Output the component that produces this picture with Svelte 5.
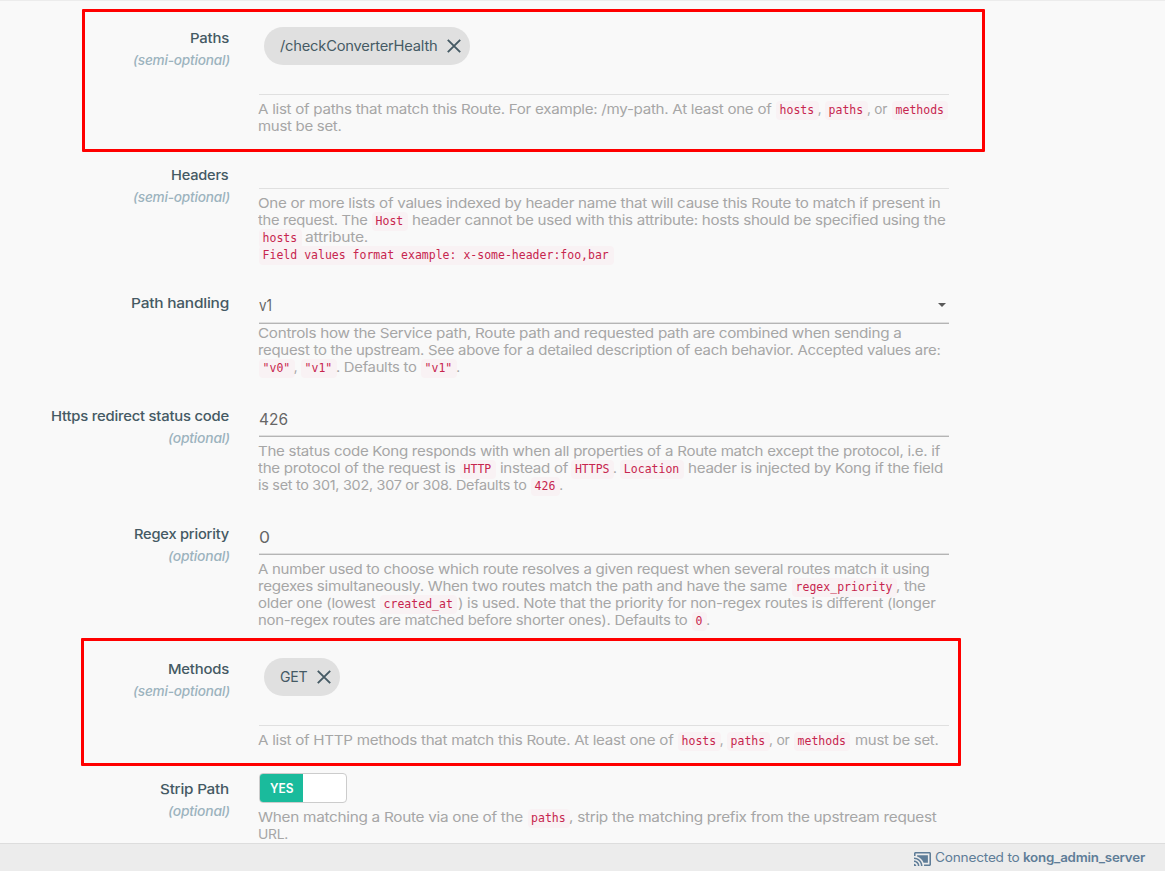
<script>
  // Each help line is a list of runs: [text, left edge, right edge] for prose, [code, left edge] for code.
  const L = 259;
  const CH = 6.93;
  const rows = [
    { label: 'Paths', opt: 'semi-optional', h: 137, kind: 'chip', chip: ['/checkConverterHealth', 157.5], lines: [
      [['A list of paths that match this Route. For example: /my-path. At least one of', L, 772.5], ['hosts', 776], [',', 818.5, 0], ['paths', 825], [', or', 868, 888], ['methods', 892]],
      [['must be set.', L, 342.5]] ] },
    { label: 'Headers', opt: 'semi-optional', h: 128, kind: 'blank', lines: [
      [['One or more lists of values indexed by header name that will cause this Route to match if present in', L, 941.5]],
      [['the request. The', L, 368.5], ['Host', 372], ['header cannot be used with this attribute: hosts should be specified using the', 412.5, 946]],
      [['hosts', L], ['attribute.', 305.5, 368.5]],
      [['Field values format example: x-some-header:foo,bar', L]] ] },
    { label: 'Path handling', opt: '', h: 113, kind: 'select', value: ['v1', 13], lines: [
      [['Controls how the Service path, Route path and requested path are combined when sending a', L, 902.5]],
      [['request to the upstream. See above for a detailed description of each behavior. Accepted values are:', L, 941.5]],
      [['"v0"', L], [',', 294.5, 0], ['"v1"', 301], ['. Defaults to', 337, 417.5], ['"v1"', 421], ['.', 457, 0]] ] },
    { label: 'Https redirect status code', opt: 'optional', h: 118, kind: 'input', value: ['426', 29], lines: [
      [['The status code Kong responds with when all properties of a Route match except the protocol, i.e. if', L, 941]],
      [['the protocol of the request is', L, 456.5], ['HTTP', 460], ['instead of', 500.5, 568.5], ['HTTPS', 571.3], ['.', 613.7, 0], ['Location', 620.3], ['header is injected by Kong if the field', 688.5, 943.5]],
      [['is set to 301, 302, 307 or 308. Defaults to', L, 527.5], ['426', 531], ['.', 560, 0]] ] },
    { label: 'Regex priority', opt: 'optional', h: 135, kind: 'input', value: ['0', 11], lines: [
      [['A number used to choose which route resolves a given request when several routes match it using', L, 930.5]],
      [['regexes simultaneously. When two routes match the path and have the same', L, 788], ['regex_priority', 792], [', the', 897, 926.5]],
      [['older one (lowest', L, 376.5], ['created_at', 380], [') is used. Note that the priority for non-regex routes is different (longer', 458.5, 936]],
      [['non-regex routes are matched before shorter ones). Defaults to', L, 688.5], ['0', 692], ['.', 707, 0]] ] },
    { label: 'Methods', opt: 'semi-optional', h: 120, kind: 'chip', chip: ['GET', 27.5], lines: [
      [['A list of HTTP methods that match this Route. At least one of', L, 674.5], ['hosts', 678], [',', 720.5, 0], ['paths', 727], [', or', 770, 790.5], ['methods', 794], ['must be set.', 855.5, 939]] ] },
    { label: 'Strip Path', opt: 'optional', h: 65, kind: 'toggle', lines: [
      [['When matching a Route via one of the', L, 524], ['paths', 527.5], [', strip the matching prefix from the upstream request', 570, 937.5]],
      [['URL.', L, 289]] ] }
  ];
  const labelW = { 'Paths': 39, 'Headers': 57.5, 'Path handling': 98, 'Https redirect status code': 178, 'Regex priority': 95, 'Methods': 61, 'Strip Path': 69 };
  const optW = { 'semi-optional': 97, 'optional': 62 };

  // Converts absolute run edges to gaps between neighbouring inline boxes.
  function runs(line) {
    let end = L;
    return line.map(([text, x, right]) => {
      const code = right === undefined;
      const w = code ? text.length * CH + 8 : right ? right - x : 4;
      const r = { text, code, gap: x - end, w, fit: right || 0 };
      end = x + w;
      return r;
    });
  }

  // Widens the letterforms so that the text fills the given width.
  function fit(node, width) {
    if (!width) return;
    node.style.display = 'inline-block';
    const natural = node.getBoundingClientRect().width;
    node.style.width = width + 'px';
    node.style.textAlign = 'left';
    node.style.transformOrigin = '0 50%';
    node.style.transform = `scaleX(${width / natural})`;
  }
</script>

<div class="page">
  <main>
    {#each rows as r}
      <div class="row" style="height:{r.h}px">
        <div class="side">
          <div class="label"><span use:fit={labelW[r.label]}>{r.label}</span></div>
          {#if r.opt}<div class="opt"><span use:fit={optW[r.opt]}>({r.opt})</span></div>{/if}
        </div>
        <div class="content">
          {#if r.kind === 'chip'}
            <div class="chips">
              <div class="chip">
                <span class="chiptext" style="width:{r.chip[1]}px"><span use:fit={r.chip[1]}>{r.chip[0]}</span></span>
                <svg width="14" height="14" viewBox="0 0 14 14"><path d="M.8.8l12.4 12.4M13.2.8L.8 13.2" fill="none" stroke="#455a64" stroke-width="1.9" /></svg>
              </div>
            </div>
          {:else if r.kind === 'blank'}
            <div class="blank"></div>
          {:else if r.kind === 'toggle'}
            <div class="toggle"><div class="yes"><span use:fit={23.5}>YES</span></div></div>
          {:else}
            <div class="field" class:select={r.kind === 'select'}>
              <span use:fit={r.value[1]}>{r.value[0]}</span>
              {#if r.kind === 'select'}<i class="caret"></i>{/if}
            </div>
          {/if}
          <div class="help">
            {#each r.lines as line}
              <div class="line">
                {#each runs(line) as s}
                  {#if s.code}<code style="margin-left:{s.gap}px;width:{s.w}px">{s.text}</code>
                  {:else}<span class="run" style="margin-left:{s.gap}px;width:{s.w}px"><span use:fit={s.fit ? s.w : 0}>{s.text}</span></span>{/if}
                {/each}
              </div>
            {/each}
          </div>
        </div>
      </div>
    {/each}
  </main>
  <footer>
    <svg width="17" height="14" viewBox="1 3 22 18" fill="#5f7d98"><path d="M1 18v3h3c0-1.66-1.34-3-3-3zm0-4v2c2.76 0 5 2.24 5 5h2c0-3.87-3.13-7-7-7zm18-7H5v1.63c3.96 1.28 7.09 4.41 8.37 8.37H19V7zM1 10v2c4.97 0 9 4.03 9 9h2c0-6.08-4.93-11-11-11zm20-7H3c-1.1 0-2 .9-2 2v3h2V5h18v14h-7v2h7c1.1 0 2-.9 2-2V5c0-1.1-.9-2-2-2z" /></svg>
    <span class="conn"><span use:fit={84.5}>Connected to</span></span>
    <span class="server"><span use:fit={122}>kong_admin_server</span></span>
  </footer>
  <div class="mark first"></div>
  <div class="mark second"></div>
</div>

<style>
  :global(body) { margin: 0; background: #f9f9f9; overflow: hidden; }
  .page { position: relative; box-sizing: border-box; width: 1165px; height: 871px; display: flex; flex-direction: column; border-top: 1px solid #ececec; background: #f9f9f9; font-family: Inter, 'Open Sans', sans-serif; white-space: nowrap; overflow: hidden; }
  main { box-sizing: border-box; flex: none; height: 842px; padding-top: 26px; overflow: hidden; }
  .row { display: grid; grid-template-columns: 229px 690px; column-gap: 30px; }
  .side { padding-top: 1px; text-align: right; font-size: 13.6px; line-height: 20px; letter-spacing: -0.2px; }
  .label { height: 20px; margin-right: 0.5px; color: #455a64; font-weight: 500; }
  .opt { height: 20px; margin: 1.5px -1px 0 0; color: #9cb3be; font-style: italic; font-weight: 500; font-size: 13px; }
  .chips { height: 67px; padding-left: 5px; border-bottom: 1px solid #e0e0e0; }
  .chip { display: inline-flex; align-items: center; gap: 9.5px; box-sizing: border-box; height: 38px; padding: 0 9px 0 16px; border-radius: 19px; background: #e0e0e0; color: #455a64; font-size: 14px; line-height: 38px; letter-spacing: -0.2px; }
  .chiptext { display: block; height: 38px; }
  .blank { height: 24px; border-bottom: 1px solid #e0e0e0; }
  .field { display: flex; align-items: center; justify-content: space-between; box-sizing: border-box; height: 32px; margin-left: -0.5px; padding: 0 3px 4px 0; border-bottom: 1px solid #b5b5b5; box-shadow: inset 0 -1px #dedede; color: #666; font-size: 16px; line-height: 28px; }
  .select { padding-bottom: 5px; }
  .caret { width: 0; height: 0; border: 4px solid transparent; border-top-color: #5a5a5a; border-bottom: 0; }
  .help { padding-top: 6px; color: #a6a6a6; font-size: 13.4px; line-height: 17px; letter-spacing: -0.25px; }
  .select + .help { padding-top: 1px; }
  .line { display: flex; height: 17px; }
  .run { flex: none; display: block; height: 17px; }
  .run > span { position: relative; left: -0.8px; }
  code { flex: none; box-sizing: border-box; height: 19px; padding: 0 4px 0 3.6px; border-radius: 4px; background: #f9f2f4; color: #c7254e; font-family: 'DejaVu Sans Mono', monospace; font-size: 11.51px; line-height: 19px; letter-spacing: 0; }
  .toggle { box-sizing: border-box; width: 88px; height: 30px; margin-top: -5px; border: 1px solid #ccc; border-radius: 4px; background: #fff; overflow: hidden; }
  .yes { box-sizing: border-box; width: 43px; height: 28px; padding-left: 9.5px; background: #1abb9c; color: #fff; font-size: 12.5px; font-weight: 600; line-height: 29px; }
  footer { display: flex; align-items: center; box-sizing: border-box; flex: none; height: 28px; padding-left: 914px; border-top: 1px solid #ddd; background: #ececec; color: #5f7d98; font-size: 12.8px; line-height: 16px; letter-spacing: -0.2px; }
  footer svg { margin-top: 3px; }
  .conn { width: 84.5px; margin: 1px 0 0 4px; }
  .server { width: 122px; margin: 1px 0 0 3px; font-weight: 600; }
  .mark { position: absolute; box-sizing: border-box; border: 3px solid #f00; border-radius: 1px; }
  .first { left: 82px; top: 8px; width: 903px; height: 143px; }
  .second { left: 81px; top: 637px; width: 880px; height: 128px; }
</style>
